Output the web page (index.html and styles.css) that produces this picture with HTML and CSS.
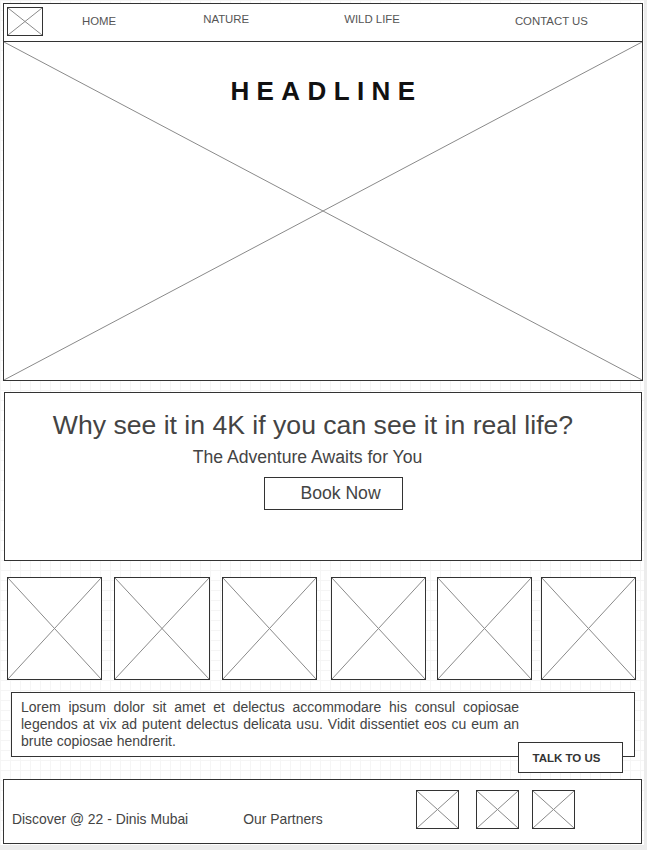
FILE: index.html
```html
<!DOCTYPE html>
<html lang="en">
  <head>
    <meta charset="UTF-8" />
    <meta name="viewport" content="width=device-width, initial-scale=1.0" />
    <title>Discover - Wireframe</title>
    <link rel="stylesheet" href="styles.css">
  </head>
  <body>
    <div class="page">
      <header class="topbar">
        <div class="logo">
          <svg class="cross" viewBox="0 0 100 100" preserveAspectRatio="none"><line x1="0" y1="0" x2="100" y2="100" /><line x1="100" y1="0" x2="0" y2="100" /></svg>
        </div>
        <nav class="menu">
          <a class="home" href="#">HOME</a>
          <a class="nature" href="#">NATURE</a>
          <a class="wild" href="#">WILD LIFE</a>
          <a class="contact" href="#">CONTACT US</a>
        </nav>
      </header>

      <section class="hero">
        <svg class="cross" viewBox="0 0 100 100" preserveAspectRatio="none"><line x1="0" y1="0" x2="100" y2="100" /><line x1="100" y1="0" x2="0" y2="100" /></svg>
        <h1>HEADLINE</h1>
      </section>

      <section class="promo">
        <h2>Why see it in 4K if you can see it in real life?</h2>
        <p>The Adventure Awaits for You</p>
        <button class="book">Book Now</button>
      </section>

      <section class="gallery">
        <div class="thumb"><svg class="cross" viewBox="0 0 100 100" preserveAspectRatio="none"><line x1="0" y1="0" x2="100" y2="100" /><line x1="100" y1="0" x2="0" y2="100" /></svg></div>
        <div class="thumb"><svg class="cross" viewBox="0 0 100 100" preserveAspectRatio="none"><line x1="0" y1="0" x2="100" y2="100" /><line x1="100" y1="0" x2="0" y2="100" /></svg></div>
        <div class="thumb"><svg class="cross" viewBox="0 0 100 100" preserveAspectRatio="none"><line x1="0" y1="0" x2="100" y2="100" /><line x1="100" y1="0" x2="0" y2="100" /></svg></div>
        <div class="thumb"><svg class="cross" viewBox="0 0 100 100" preserveAspectRatio="none"><line x1="0" y1="0" x2="100" y2="100" /><line x1="100" y1="0" x2="0" y2="100" /></svg></div>
        <div class="thumb"><svg class="cross" viewBox="0 0 100 100" preserveAspectRatio="none"><line x1="0" y1="0" x2="100" y2="100" /><line x1="100" y1="0" x2="0" y2="100" /></svg></div>
        <div class="thumb"><svg class="cross" viewBox="0 0 100 100" preserveAspectRatio="none"><line x1="0" y1="0" x2="100" y2="100" /><line x1="100" y1="0" x2="0" y2="100" /></svg></div>
      </section>

      <section class="about">
        <p>Lorem ipsum dolor sit amet et delectus accommodare his consul copiosae legendos at vix ad putent delectus delicata usu. Vidit dissentiet eos cu eum an brute copiosae hendrerit.</p>
        <button class="talk">TALK TO US</button>
      </section>

      <footer class="footer">
        <span class="credit">Discover @ 22 - Dinis Mubai</span>
        <span class="partners-label">Our Partners</span>
        <div class="partners">
          <div class="partner"><svg class="cross" viewBox="0 0 100 100" preserveAspectRatio="none"><line x1="0" y1="0" x2="100" y2="100" /><line x1="100" y1="0" x2="0" y2="100" /></svg></div>
          <div class="partner"><svg class="cross" viewBox="0 0 100 100" preserveAspectRatio="none"><line x1="0" y1="0" x2="100" y2="100" /><line x1="100" y1="0" x2="0" y2="100" /></svg></div>
          <div class="partner"><svg class="cross" viewBox="0 0 100 100" preserveAspectRatio="none"><line x1="0" y1="0" x2="100" y2="100" /><line x1="100" y1="0" x2="0" y2="100" /></svg></div>
        </div>
      </footer>
    </div>
  </body>
</html>
```

FILE: styles.css
```css
* {
  box-sizing: border-box;
}

body {
  margin: 0;
  background: #ececec;
  font-family: "Liberation Sans", Arial, sans-serif;
  color: #444;
}

.page {
  width: 644px;
  height: 845px;
  padding: 3px 0 0 3px;
  background-color: #fff;
  background-image:
    linear-gradient(to right, #f5f5f5 1px, transparent 1px),
    linear-gradient(to bottom, #f5f5f5 1px, transparent 1px);
  background-size: 10px 10px;
  display: flex;
  flex-direction: column;
}

.cross {
  position: absolute;
  top: 0;
  left: 0;
  width: 100%;
  height: 100%;
}

.cross line {
  stroke: #8a8a8a;
  stroke-width: 1;
  vector-effect: non-scaling-stroke;
}

/* header */
.topbar {
  width: 640px;
  height: 39px;
  border: 1px solid #333;
  background: #fff;
  display: flex;
  align-items: flex-start;
  padding: 3px 0 0 3px;
}

.logo {
  position: relative;
  width: 36px;
  height: 29px;
  border: 1px solid #333;
}

.menu {
  display: flex;
  font-size: 11.4px;
}

.menu a {
  color: #555;
  text-decoration: none;
}

.menu .home {
  margin: 8px 0 0 39px;
}

.menu .nature {
  margin: 6px 0 0 87px;
}

.menu .wild {
  margin: 6px 0 0 95px;
}

.menu .contact {
  margin: 8px 0 0 115px;
}

/* hero */
.hero {
  position: relative;
  width: 640px;
  height: 339px;
  border: 1px solid #333;
  border-top: none;
  background: #fff;
}

.hero h1 {
  position: relative;
  margin: 0;
  padding: 34px 0 0 7px;
  text-align: center;
  font-size: 26px;
  font-weight: bold;
  letter-spacing: 7.4px;
  color: #111;
}

/* promo */
.promo {
  width: 638px;
  height: 169px;
  margin: 11px 0 0 1px;
  border: 1px solid #333;
  background: #fff;
  text-align: center;
  padding-top: 17px;
}

.promo h2 {
  margin: 0;
  font-size: 26.6px;
  font-weight: normal;
  color: #444;
  padding-right: 20px;
}

.promo p {
  margin: 6px 0 0;
  font-size: 17.6px;
  color: #444;
  padding-right: 31px;
}

.book {
  margin: 9px 0 0 20px;
  width: 139px;
  height: 33px;
  border: 1px solid #333;
  background: #fff;
  font-family: inherit;
  font-size: 17.6px;
  color: #444;
  padding: 0 0 0 15px;
}

/* gallery */
.gallery {
  display: flex;
  margin: 16px 0 0 4px;
}

.thumb {
  position: relative;
  width: 95px;
  height: 103px;
  border: 1px solid #333;
  background: #fff;
}

.thumb + .thumb {
  margin-left: 12px;
}

.thumb:nth-child(2) {
  width: 96px;
}

.thumb:nth-child(4) {
  margin-left: 14px;
}

.thumb:nth-child(5) {
  margin-left: 11px;
}

.thumb:nth-child(6) {
  margin-left: 9px;
}

/* about */
.about {
  position: relative;
  width: 624px;
  height: 65px;
  margin: 12px 0 0 8px;
  border: 1px solid #333;
  background: #fff;
  padding: 6px 0 0 9px;
}

.about p {
  margin: 0;
  width: 498px;
  font-size: 14px;
  line-height: 17px;
  text-align: justify;
  color: #444;
}

.talk {
  position: absolute;
  left: 506px;
  top: 49px;
  width: 105px;
  height: 31px;
  border: 1px solid #333;
  background: #fff;
  font-family: inherit;
  font-size: 11.5px;
  font-weight: bold;
  color: #333;
  padding: 0 8px 0 0;
}

/* footer */
.footer {
  width: 639px;
  height: 65px;
  margin-top: 22px;
  border: 1px solid #333;
  background: #fff;
  display: flex;
  align-items: flex-start;
  font-size: 13.9px;
  color: #444;
  padding-left: 8px;
}

.credit {
  margin-top: 31px;
}

.partners-label {
  margin: 31px 0 0 55px;
}

.partners {
  display: flex;
  margin: 10px 0 0 93px;
}

.partner {
  position: relative;
  width: 43px;
  height: 39px;
  border: 1px solid #333;
  margin-right: 17px;
}

.partner:nth-child(2) {
  margin-right: 13px;
}
```
